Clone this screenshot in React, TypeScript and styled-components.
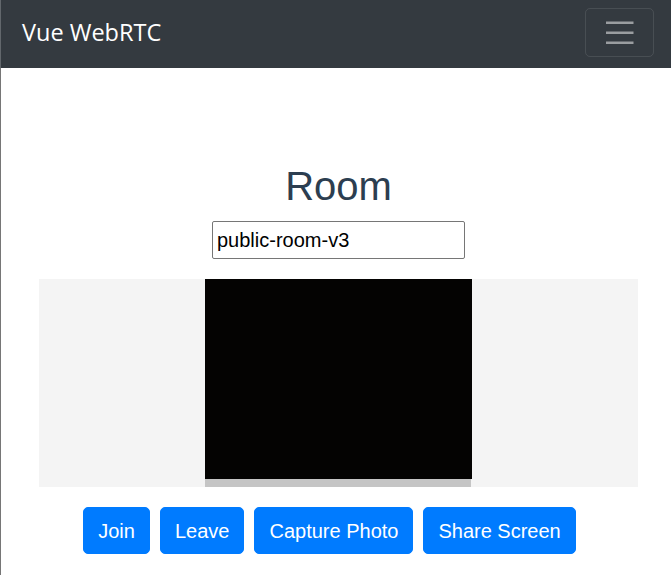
import React from "react";
import styled, { createGlobalStyle } from "styled-components";

const Global = createGlobalStyle`
  html, body { margin: 0; padding: 0; background: #ffffff; }
  body { font-family: "Liberation Sans", Arial, sans-serif; }
  * { box-sizing: border-box; }
`;

const Page = styled.div`
  min-height: 575px;
  display: flex;
  flex-direction: column;
`;

const Navbar = styled.nav`
  height: 68px;
  background: #343a40;
  border-left: 1px solid #62676c;
  display: flex;
  align-items: center;
  justify-content: space-between;
  padding: 0 17px 0 21px;
`;

const Brand = styled.a`
  font-family: "Open Sans", "Noto Sans", sans-serif;
  font-size: 23.5px;
  color: #ffffff;
  text-decoration: none;
  line-height: 1.5;
  padding-bottom: 2px;
`;

const Toggler = styled.button`
  width: 69px;
  height: 49px;
  margin-top: -3px;
  border: 1px solid rgba(255, 255, 255, 0.1);
  border-radius: 5px;
  background: transparent;
  display: flex;
  align-items: center;
  justify-content: center;
  padding: 0;
`;

const Main = styled.main`
  flex: 1;
  border-left: 1px solid #767676;
  display: flex;
  flex-direction: column;
  align-items: center;
  padding: 94px 33px 0 38px;
`;

const Title = styled.h1`
  margin: 0;
  font-family: "Liberation Sans", Arial, sans-serif;
  font-weight: 400;
  font-size: 40px;
  line-height: 48px;
  color: #2c3e50;
`;

const RoomInput = styled.input`
  margin-top: 11px;
  width: 253px;
  height: 38px;
  border: 1px solid #767676;
  border-radius: 2px;
  padding: 0 4px;
  font-family: "Liberation Sans", Arial, sans-serif;
  font-size: 20px;
  color: #000;
  outline: none;
`;

const Stage = styled.div`
  margin-top: 20px;
  width: 100%;
  height: 208px;
  background: #f4f4f4;
  display: flex;
  justify-content: center;
`;

const Video = styled.div`
  width: 267px;
  display: flex;
  flex-direction: column;
`;

const Screen = styled.div`
  height: 200px;
  background: #040302;
`;

const Controls = styled.div`
  height: 8px;
  width: 266px;
  background: #c5c5c5;
`;

const Actions = styled.div`
  margin-top: 20px;
  display: flex;
  justify-content: center;
  width: 100%;
  padding-right: 18px;
`;

const Button = styled.button`
  height: 47px;
  margin-right: 10px;
  padding: 0 14px;
  border: 1px solid #007bff;
  border-radius: 5px;
  background: #007bff;
  color: #ffffff;
  font-family: "Liberation Sans", Arial, sans-serif;
  font-size: 20px;
  line-height: 30px;
  &:last-child { margin-right: 0; }
`;

export default function App() {
  return (
    <Page>
      <Global />
      <Navbar>
        <Brand href="#">Vue WebRTC</Brand>
        <Toggler aria-label="Toggle navigation">
          <svg width="37.5" height="37.5" viewBox="0 0 30 30">
            <path
              d="M4 7h22M4 15h22M4 23h22"
              stroke="rgba(255,255,255,0.5)"
              strokeWidth="2"
              strokeLinecap="butt"
            />
          </svg>
        </Toggler>
      </Navbar>
      <Main>
        <Title>Room</Title>
        <RoomInput defaultValue="public-room-v3" />
        <Stage>
          <Video>
            <Screen />
            <Controls />
          </Video>
        </Stage>
        <Actions>
          <Button>Join</Button>
          <Button>Leave</Button>
          <Button>Capture Photo</Button>
          <Button>Share Screen</Button>
        </Actions>
      </Main>
    </Page>
  );
}
